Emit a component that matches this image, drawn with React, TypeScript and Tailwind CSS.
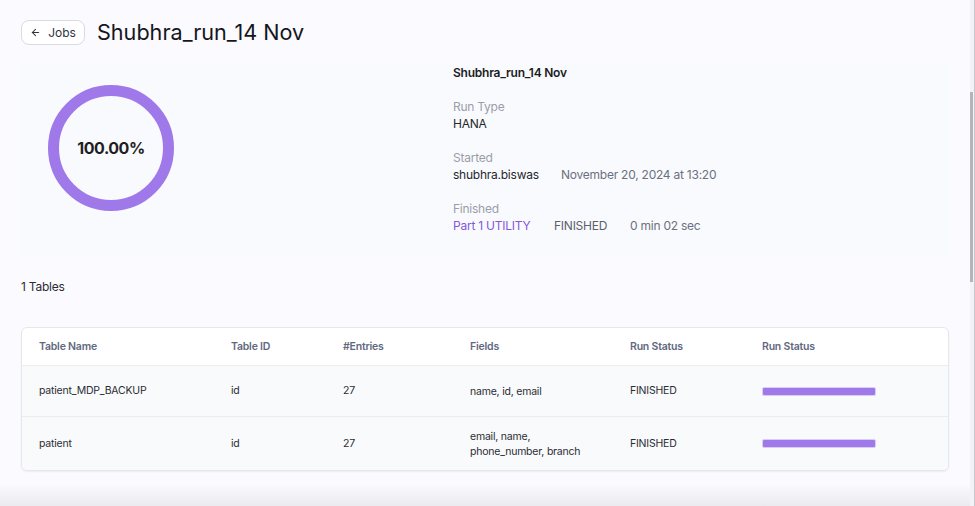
import React from "react";

const rows = [
  { name: "patient_MDP_BACKUP", id: "id", entries: "27", fields: ["name, id, email"], status: "FINISHED" },
  { name: "patient", id: "id", entries: "27", fields: ["email, name,", "phone_number, branch"], status: "FINISHED" },
];

function Ring() {
  return (
    <div className="relative w-[126px] h-[126px]">
      <svg width="126" height="126" viewBox="0 0 126 126">
        <circle cx="63" cy="63" r="57.5" fill="none" stroke="#9f78ea" strokeWidth="11" />
      </svg>
      <div className="absolute inset-0 flex items-center justify-center text-[16px] tracking-[-0.03em] font-bold text-[#1f1f23]">100.00%</div>
    </div>
  );
}

export default function App() {
  return (
    <div className="flex w-[975px] h-[506px] overflow-hidden bg-[#fbfaff]" style={{ fontFamily: "Inter, 'Noto Sans', sans-serif" }}>
      <div className="flex flex-col w-[970px] h-full">
        <div className="flex items-center gap-3 pl-[21px] pt-5">
          <button className="flex items-center gap-[7px] h-[25px] w-[64px] justify-center rounded-lg border border-[#d9dbe1] bg-white text-[12px] text-[#30343d]">
            <svg width="11" height="11" viewBox="0 0 24 24" fill="none" stroke="#30343d" strokeWidth="2.2" strokeLinecap="round" strokeLinejoin="round">
              <path d="M19 12H5" />
              <path d="M12 19l-7-7 7-7" />
            </svg>
            Jobs
          </button>
          <h1 className="text-[21.6px] text-[#14161c] leading-none">Shubhra_run_14 Nov</h1>
        </div>

        <div className="mx-[21px] mt-5 h-[190px] bg-[#f9fafd] flex">
          <div className="w-[432px] pl-[27px] pt-5">
            <Ring />
          </div>
          <div className="flex flex-col text-[12px] tracking-[-0.02em] leading-[17px]">
            <div className="font-semibold text-[#1c1d22] mt-[-1px]">Shubhra_run_14 Nov</div>
            <div className="mt-[17px] text-[#9a9eaa]">Run Type</div>
            <div className="text-[#25272d]">HANA</div>
            <div className="mt-[17px] text-[#9a9eaa]">Started</div>
            <div className="flex">
              <span className="text-[#25272d] w-[108px]">shubhra.biswas</span>
              <span className="text-[#6b7080]">November 20, 2024 at 13:20</span>
            </div>
            <div className="mt-[17px] text-[#9a9eaa]">Finished</div>
            <div className="flex">
              <span className="text-[#8456de] w-[101px]">Part 1 UTILITY</span>
              <span className="text-[#5b606c] w-[76px]">FINISHED</span>
              <span className="text-[#6b7080]">0 min 02 sec</span>
            </div>
          </div>
        </div>

        <div className="pl-[21px] mt-[23px] text-[12px] tracking-[-0.02em] text-[#2a2c33] leading-[17px]">1 Tables</div>

        <div className="mx-[21px] mt-[32px] rounded-md border border-[#e6e7ec] bg-white shadow-[0_1px_2px_rgba(0,0,0,0.06)] overflow-hidden text-[10.5px] tracking-[-0.02em]">
          <div className="grid grid-cols-[192px_112px_127px_160px_132px_1fr] h-[37px] items-center pl-[17px] font-semibold text-[#5f6880]">
            <div>Table Name</div>
            <div>Table ID</div>
            <div>#Entries</div>
            <div>Fields</div>
            <div>Run Status</div>
            <div>Run Status</div>
          </div>
          {rows.map((r, i) => (
            <div
              key={r.name}
              className={`grid grid-cols-[192px_112px_127px_160px_132px_1fr] items-center pl-[17px] bg-[#f9fafc] border-t border-[#ebecf0] text-[#2b2d33] ${i === 0 ? "h-[51px]" : "h-[54px]"}`}
            >
              <div>{r.name}</div>
              <div>{r.id}</div>
              <div>{r.entries}</div>
              <div className="leading-[15px]">
                {r.fields.map((f) => (
                  <div key={f}>{f}</div>
                ))}
              </div>
              <div>{r.status}</div>
              <div>
                <div className="w-[114px] h-[9px] rounded-[2px] bg-[#9f78ea] border border-[#d9cdf5]" />
              </div>
            </div>
          ))}
        </div>

        <div className="mt-auto h-[22px] bg-gradient-to-b from-[#fbfaff] to-[#ebeaef]" />
      </div>
      <div className="w-[5px] h-full bg-[#f3f2f6] flex flex-col border-r border-[#c9c9cd]">
        <div className="h-[92px]" />
        <div className="h-[190px] w-[3px] bg-[#b4b5b9]" />
      </div>
    </div>
  );
}
